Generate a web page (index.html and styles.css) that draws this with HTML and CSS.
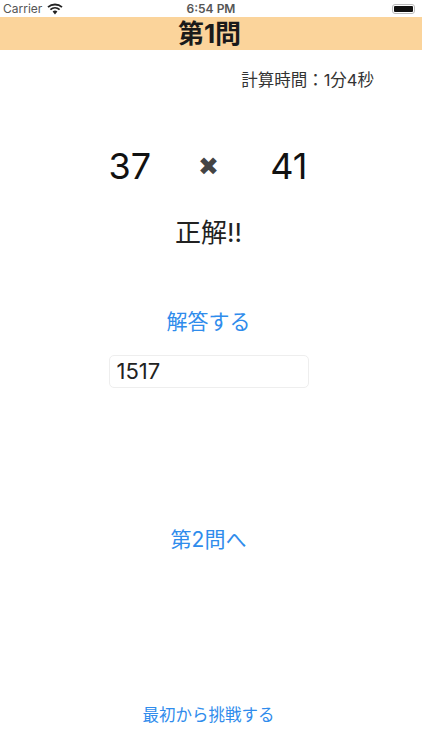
FILE: index.html
```html
<!DOCTYPE html>
<html lang="ja">
<head>
    <meta charset="UTF-8">
    <meta name="viewport" content="width=device-width, initial-scale=1.0">
    <title>第1問</title>
    <link rel="stylesheet" href="styles.css">
</head>
<body>
    <div class="screen">
        <div class="status-bar">
            <div class="status-left">
                <span>Carrier</span>
                <svg class="wifi" width="16" height="12" viewBox="0 0 16 12">
                    <path d="M8 11.5 5.6 8.6a3.6 3.6 0 0 1 4.8 0z" fill="#222"/>
                    <path d="M1 4.2a10.4 10.4 0 0 1 14 0" fill="none" stroke="#222" stroke-width="1.8"/>
                    <path d="M3.4 6.6a7 7 0 0 1 9.2 0" fill="none" stroke="#222" stroke-width="1.8"/>
                </svg>
            </div>
            <span class="status-time">6:54 PM</span>
            <div class="battery"><div class="battery-level"></div></div>
        </div>
        <div class="title-bar">第1問</div>
        <div class="content">
            <div class="timer">計算時間：1分4秒</div>
            <div class="problem">
                <span class="num">37</span>
                <span class="times">✖</span>
                <span class="num num-right">41</span>
            </div>
            <div class="result">正解!!</div>
            <div class="answer-btn">解答する</div>
            <div class="answer-box">1517</div>
            <div class="next-btn">第2問へ</div>
            <div class="restart-btn">最初から挑戦する</div>
        </div>
    </div>
</body>
</html>
```

FILE: styles.css
```css
body {
    margin: 0;
    padding: 0;
    background: white;
    font-family: Inter, "Noto Sans CJK JP", sans-serif;
    color: #222;
}
.screen {
    height: 750px;
    display: flex;
    flex-direction: column;
    overflow: hidden;
}
.status-bar {
    height: 17px;
    padding: 0 3px;
    display: grid;
    grid-template-columns: 1fr auto 1fr;
    align-items: center;
    font-size: 12px;
    color: #555;
}
.status-left {
    display: flex;
    align-items: center;
    gap: 5px;
}
.status-time {
    font-weight: 600;
    color: #555;
}
.battery {
    justify-self: end;
    width: 23px;
    height: 10px;
    margin-right: 4px;
    padding: 1px;
    box-sizing: border-box;
    border: 1px solid #bbb;
    border-radius: 3px;
}
.battery-level {
    height: 100%;
    background: #111;
    border-radius: 1px;
}
.title-bar {
    height: 33px;
    background: #fbd49b;
    color: #1a1a1a;
    font-size: 26px;
    font-weight: bold;
    line-height: 33px;
    text-align: center;
    padding-right: 3px;
}
.content {
    width: 417px;
    display: flex;
    flex-direction: column;
    align-items: center;
}
.timer {
    align-self: flex-end;
    margin: 20px 43px 0 0;
    font-size: 16.5px;
    line-height: 20px;
    color: #333;
}
.problem {
    width: 200px;
    margin-top: 54px;
    display: grid;
    grid-template-columns: 1fr auto 1fr;
    align-items: center;
    font-size: 36px;
    line-height: 44px;
    color: #111;
}
.times {
    font-size: 25px;
    color: #444;
}
.num-right {
    justify-self: end;
    margin-right: 1px;
}
.result {
    margin-top: 28px;
    font-size: 26px;
    line-height: 34px;
}
.answer-btn {
    margin-top: 58px;
    font-size: 21px;
    line-height: 28px;
    color: #2f8cec;
}
.answer-box {
    width: 200px;
    height: 33px;
    margin-top: 19px;
    box-sizing: border-box;
    padding: 0 7px;
    border: 1px solid #eeeeee;
    border-radius: 5px;
    font-size: 22px;
    line-height: 31px;
    color: #222;
}
.next-btn {
    margin-top: 138px;
    font-size: 21px;
    line-height: 28px;
    color: #2f8cec;
}
.restart-btn {
    margin-top: 150px;
    font-size: 16.5px;
    line-height: 22px;
    color: #2f8cec;
}
```
